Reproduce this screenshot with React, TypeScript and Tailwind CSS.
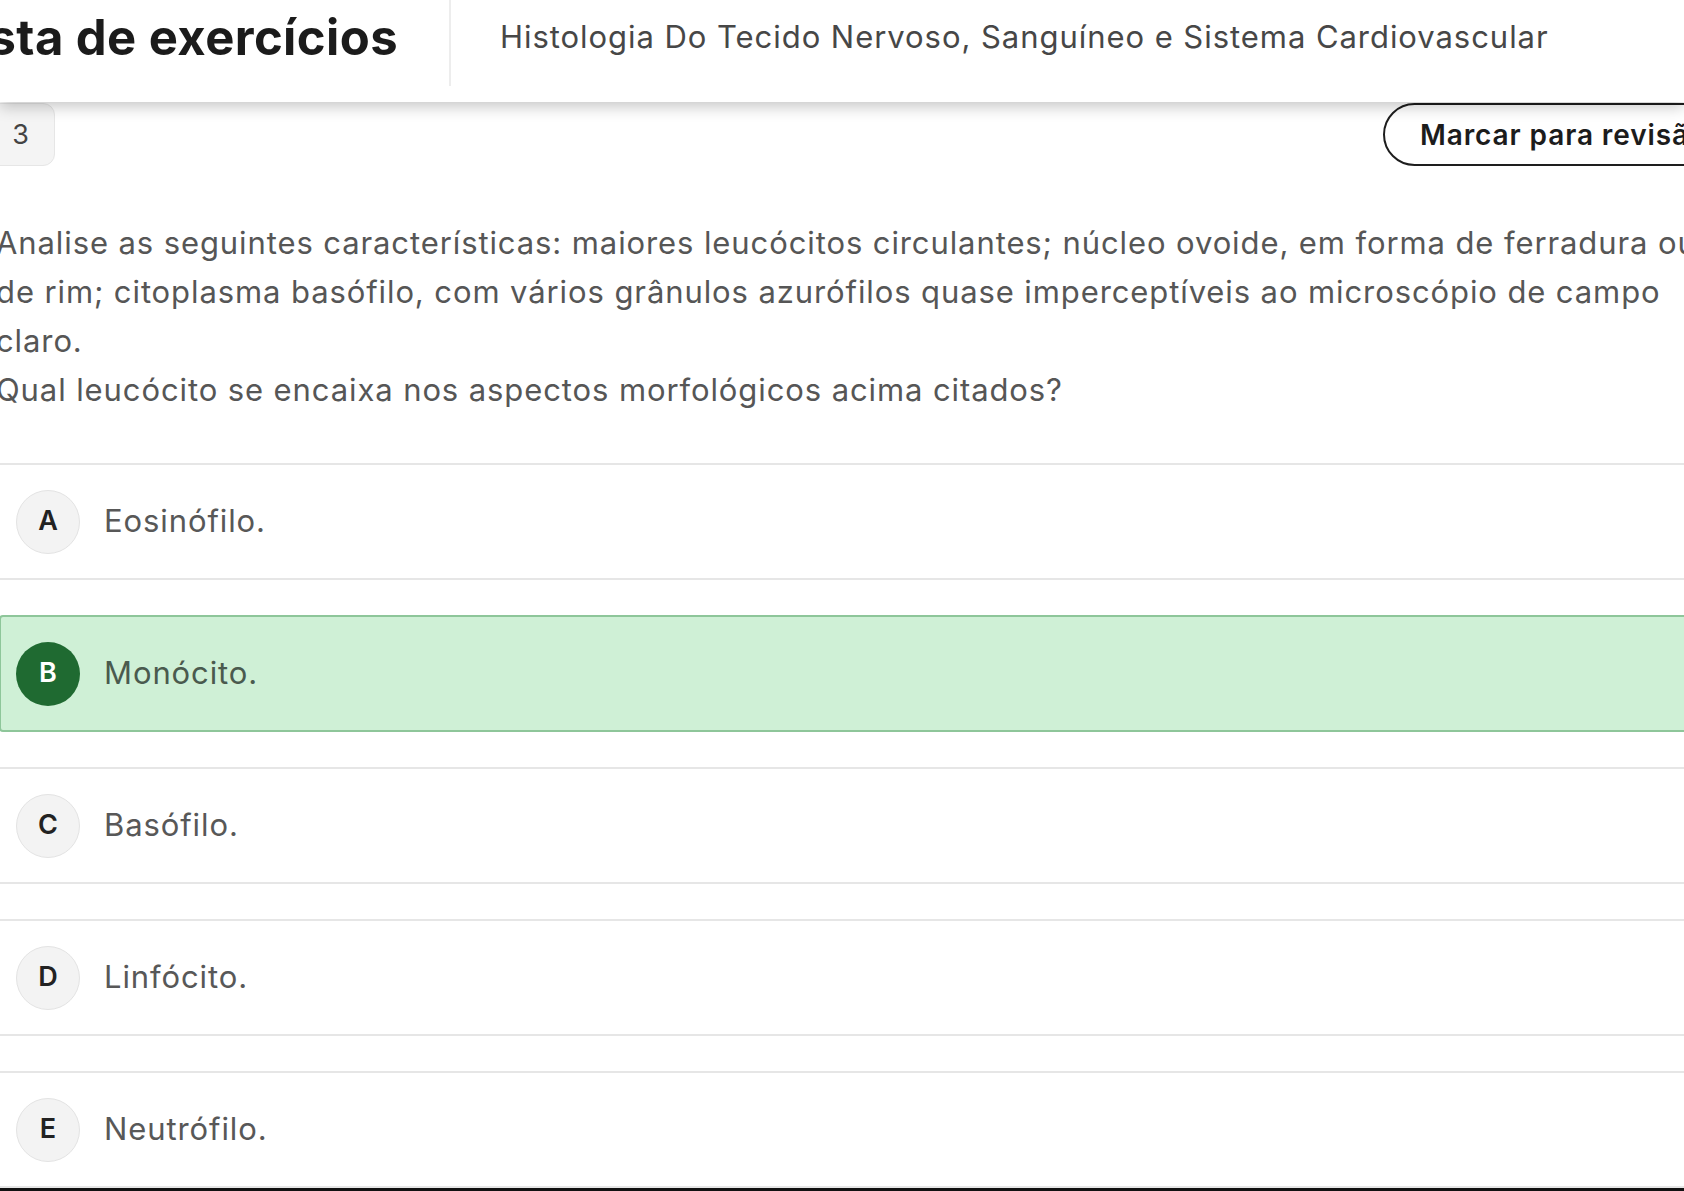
import React from "react";

const options = [
  { letter: "A", text: "Eosinófilo.", correct: false },
  { letter: "B", text: "Monócito.", correct: true },
  { letter: "C", text: "Basófilo.", correct: false },
  { letter: "D", text: "Linfócito.", correct: false },
  { letter: "E", text: "Neutrófilo.", correct: false },
];

export default function App() {
  return (
    <div
      className="w-[1684px] h-[1191px] overflow-hidden bg-white flex flex-col"
      style={{ fontFamily: "Inter, 'Liberation Sans', sans-serif" }}
    >
      <header className="relative z-10 h-[102px] shrink-0 bg-white shadow-[0_5px_14px_rgba(0,0,0,0.22)] flex items-start">
        <div className="-ml-[200px] w-[649px] shrink-0 flex justify-end pr-[51px] pt-[13px]">
          <h1 className="text-[49px] leading-none font-bold text-[#1b1b1b] whitespace-nowrap tracking-[0.4px]">
            Lista de exercícios
          </h1>
        </div>
        <div className="w-[2px] h-[86px] bg-[#ededed] shrink-0" />
        <div className="pl-[49px] pt-[21px] text-[31px] leading-none tracking-[0.95px] text-[#474747] whitespace-nowrap">
          Histologia Do Tecido Nervoso, Sanguíneo e Sistema Cardiovascular
        </div>
      </header>

      <main className="-ml-[10px] w-[1760px] pt-[1px]">
        <div className="flex items-start h-[63px]">
          <div className="w-[65px] h-[63px] rounded-r-[12px] bg-[#f4f4f4] border border-[#e6e6e6] flex items-center justify-end pr-[25px] text-[27px] leading-none text-[#444]">
            3
          </div>
          <button className="ml-auto w-[367px] h-[63px] rounded-l-full border-2 border-[#1e1e1e] flex items-center pl-[35px] text-[28px] font-semibold tracking-[0.9px] text-[#1c1c1c] whitespace-nowrap">
            Marcar para revisão
          </button>
        </div>

        <div className="pl-[6px] mt-[52px] text-[31px] leading-[49px] tracking-[0.9px] text-[#565656] whitespace-nowrap">
          <p>
            <span className="block">
              Analise as seguintes características: maiores leucócitos circulantes; núcleo ovoide, em forma de ferradura ou
            </span>
            <span className="block">
              de rim; citoplasma basófilo, com vários grânulos azurófilos quase imperceptíveis ao microscópio de campo
            </span>
            <span className="block">claro.</span>
          </p>
          <p>Qual leucócito se encaixa nos aspectos morfológicos acima citados?</p>
        </div>

        <div className="mt-[49px] ml-[9px] flex flex-col gap-[35px]">
          {options.map((o) =>
            o.correct ? (
              <div
                key={o.letter}
                className="h-[117px] border-2 border-[#8ec69a] bg-[#cff0d6] rounded-l-[4px] flex items-center pl-[15px]"
              >
                <div className="w-[64px] h-[64px] rounded-full bg-[#1f6a31] flex items-center justify-center text-[27px] font-semibold text-white">
                  {o.letter}
                </div>
                <span className="ml-[24px] text-[31px] tracking-[0.9px] text-[#4a5a4e]">{o.text}</span>
              </div>
            ) : (
              <div
                key={o.letter}
                className="h-[117px] border-y-2 border-[#e6e6e6] bg-white flex items-center pl-[17px]"
              >
                <div className="w-[64px] h-[64px] rounded-full bg-[#f3f3f3] border border-[#e3e3e3] flex items-center justify-center text-[27px] font-semibold text-[#222]">
                  {o.letter}
                </div>
                <span className="ml-[24px] text-[31px] tracking-[0.9px] text-[#585858]">{o.text}</span>
              </div>
            )
          )}
        </div>
      </main>
      <div className="mt-auto h-[3px] w-full bg-[#111] shrink-0" />
    </div>
  );
}
